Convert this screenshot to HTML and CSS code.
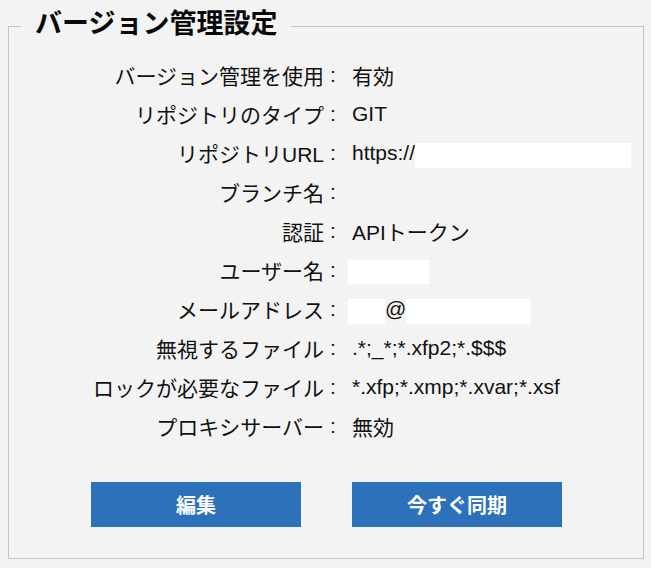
FILE: index.html
```html
<!DOCTYPE html>
<html lang="ja">
<head>
<meta charset="utf-8">
<title>バージョン管理設定</title>
<link rel="stylesheet" href="styles.css">
</head>
<body>
<fieldset class="panel">
  <legend class="panel-title">バージョン管理設定</legend>
  <div class="props">
    <div class="label">バージョン管理を使用</div><div class="colon">:</div><div class="value">有効</div>
    <div class="label">リポジトリのタイプ</div><div class="colon">:</div><div class="value">GIT</div>
    <div class="label">リポジトリURL</div><div class="colon">:</div><div class="value">https://<span class="mask mask-url"></span></div>
    <div class="label">ブランチ名</div><div class="colon">:</div><div class="value"></div>
    <div class="label">認証</div><div class="colon">:</div><div class="value">APIトークン</div>
    <div class="label">ユーザー名</div><div class="colon">:</div><div class="value"><span class="mask mask-user"></span></div>
    <div class="label">メールアドレス</div><div class="colon">:</div><div class="value"><span class="mask mask-local"></span>@<span class="mask mask-domain"></span></div>
    <div class="label">無視するファイル</div><div class="colon">:</div><div class="value">.*;_*;*.xfp2;*.$$$</div>
    <div class="label">ロックが必要なファイル</div><div class="colon">:</div><div class="value">*.xfp;*.xmp;*.xvar;*.xsf</div>
    <div class="label">プロキシサーバー</div><div class="colon">:</div><div class="value">無効</div>
  </div>
  <div class="actions">
    <button class="btn" type="button">編集</button>
    <button class="btn" type="button">今すぐ同期</button>
  </div>
</fieldset>
</body>
</html>
```

FILE: styles.css
```css
html, body {
  margin: 0;
  background: #f3f3f3;
}
body {
  padding: 5px 7px 0 8px;
  font-family: "Liberation Sans", "Noto Sans CJK JP", sans-serif;
  color: #111;
}
.panel {
  margin: 0;
  padding: 0 0 29px 0;
  border: 1px solid #c4c4c4;
  width: 636px;
  box-sizing: border-box;
  height: 554px;
}
.panel-title {
  margin-left: 12px;
  padding: 0 14px 4px 14px;
  font-size: 27px;
  line-height: 38px;
  font-weight: bold;
  color: #0a0a0a;
}
.props {
  display: grid;
  grid-template-columns: 315px 28px 1fr;
  grid-auto-rows: 39px;
  margin-top: 8px;
  font-size: 21px;
}
.label, .colon, .value {
  display: flex;
  align-items: center;
  white-space: nowrap;
}
.label {
  justify-content: flex-end;
}
.colon {
  padding-left: 6px;
}
.mask {
  display: inline-block;
  background: #ffffff;
  margin-top: 5px;
}
.mask-url {
  width: 216px;
  height: 25px;
}
.mask-user {
  width: 81px;
  height: 24px;
  margin-left: -4px;
}
.mask-local {
  width: 37px;
  height: 25px;
  margin-left: -4px;
}
.mask-domain {
  width: 125px;
  height: 25px;
}
.actions {
  display: flex;
  justify-content: center;
  gap: 51px;
  margin-top: 37px;
  padding-left: 1px;
}
.btn {
  width: 210px;
  height: 45px;
  border: none;
  background: #2e71bb;
  color: #fff;
  font-family: "Noto Sans CJK JP", sans-serif;
  font-size: 20px;
  font-weight: bold;
  padding: 0;
}
```
